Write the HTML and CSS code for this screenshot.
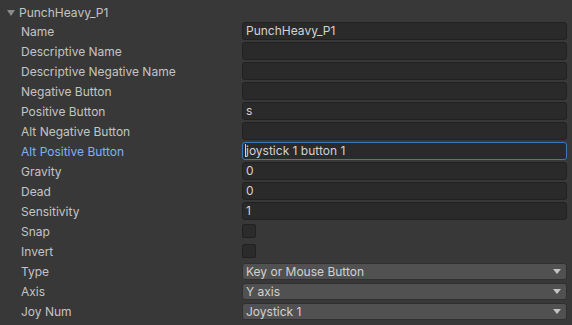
FILE: index.html
```html
<!DOCTYPE html>
<html lang="en">
<head>
    <meta charset="UTF-8">
    <title>Input Axis - PunchHeavy_P1</title>
    <link rel="stylesheet" href="styles.css">
</head>
<body>
    <div class="inspector">
        <!-- Foldout header -->
        <div class="foldout">
            <span class="arrow"></span>
            <span class="foldout-title">PunchHeavy_P1</span>
        </div>

        <div class="row"><label>Name</label><div class="field">PunchHeavy_P1</div></div>
        <div class="row"><label>Descriptive Name</label><div class="field"></div></div>
        <div class="row"><label>Descriptive Negative Name</label><div class="field"></div></div>
        <div class="row"><label>Negative Button</label><div class="field"></div></div>
        <div class="row"><label>Positive Button</label><div class="field">s</div></div>
        <div class="row"><label>Alt Negative Button</label><div class="field"></div></div>
        <div class="row focused"><label>Alt Positive Button</label><div class="field"><span class="caret"></span>joystick 1 button 1</div></div>
        <div class="row"><label>Gravity</label><div class="field">0</div></div>
        <div class="row"><label>Dead</label><div class="field">0</div></div>
        <div class="row"><label>Sensitivity</label><div class="field">1</div></div>
        <div class="row"><label>Snap</label><div class="check"></div></div>
        <div class="row"><label>Invert</label><div class="check"></div></div>
        <div class="row"><label>Type</label><div class="popup">Key or Mouse Button<span class="drop"></span></div></div>
        <div class="row"><label>Axis</label><div class="popup">Y axis<span class="drop"></span></div></div>
        <div class="row"><label>Joy Num</label><div class="popup">Joystick 1<span class="drop"></span></div></div>
    </div>
</body>
</html>
```

FILE: styles.css
```css
body {
    margin: 0;
    padding: 0;
    background-color: #383838;
    font-family: Inter, "Noto Sans", sans-serif;
    font-size: 12px;
    color: #c4c4c4;
}
.inspector {
    padding: 2px 5px 0 0;
}
/* Foldout header */
.foldout {
    display: flex;
    align-items: center;
    height: 20px;
    padding-left: 7px;
}
.arrow {
    width: 0;
    height: 0;
    border-left: 4px solid transparent;
    border-right: 4px solid transparent;
    border-top: 6px solid #8a8a8a;
    margin-right: 4px;
    margin-top: 1px;
}
.foldout-title {
    color: #c4c4c4;
}
/* Property rows */
.row {
    display: flex;
    align-items: center;
    height: 18px;
    margin-bottom: 2px;
}
.row label {
    width: 221px;
    padding-left: 21px;
    flex-shrink: 0;
}
.focused label {
    color: #7fb0f7;
}
.field {
    flex: 1;
    height: 16px;
    line-height: 16px;
    padding-left: 3px;
    background-color: #2a2a2a;
    border: 1px solid #212121;
    border-radius: 3px;
    color: #d2d2d2;
    white-space: nowrap;
}
.focused .field {
    border-color: #3a79bb;
}
.caret {
    display: inline-block;
    width: 1px;
    height: 13px;
    background-color: #d2d2d2;
    vertical-align: -2px;
    margin-left: -1px;
}
.check {
    width: 12px;
    height: 12px;
    background-color: #2b2b2b;
    border: 1px solid #212121;
    border-radius: 2px;
}
.popup {
    flex: 1;
    position: relative;
    height: 15px;
    line-height: 15px;
    padding-left: 3px;
    margin-top: 1px;
    background-color: #515151;
    border: 1px solid #303030;
    border-radius: 3px;
    color: #d2d2d2;
}
.drop {
    position: absolute;
    right: 5px;
    top: 5px;
    width: 0;
    height: 0;
    border-left: 4px solid transparent;
    border-right: 4px solid transparent;
    border-top: 5px solid #c4c4c4;
}
```
